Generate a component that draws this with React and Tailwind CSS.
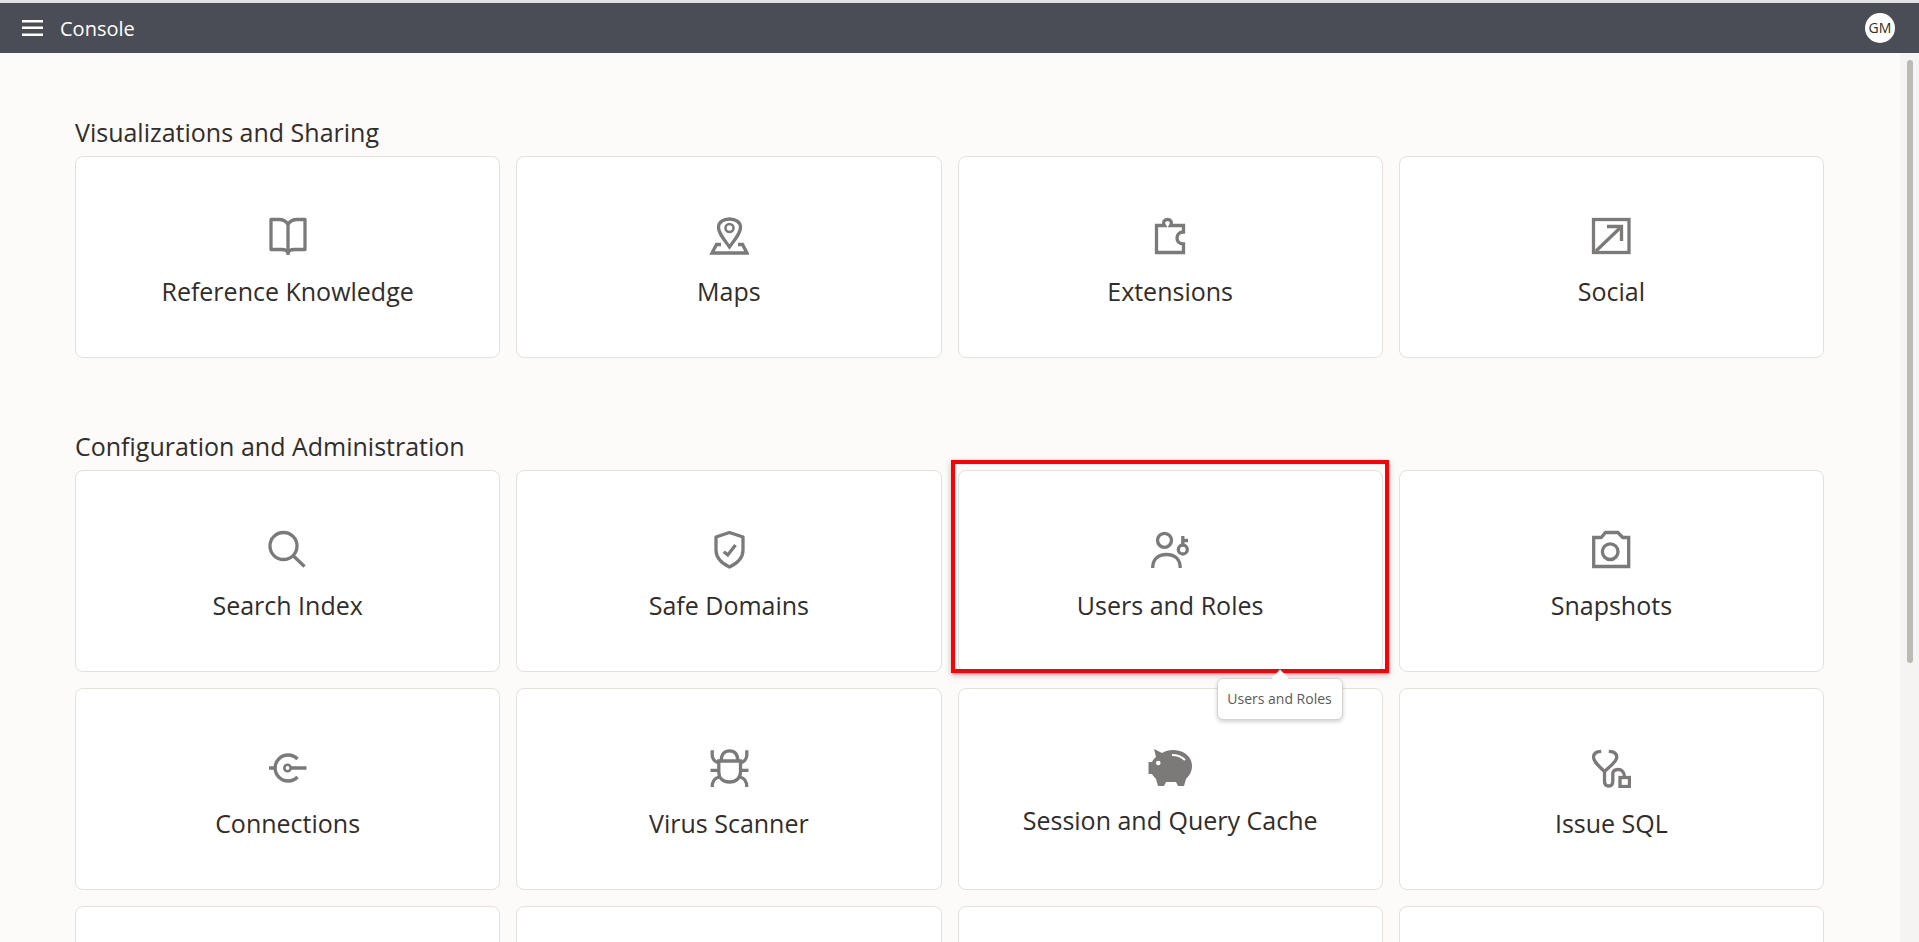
const base = {
    fill: 'none',
    stroke: 'currentColor',
    strokeWidth: 3.3,
};

function Icon({ children }) {
    return (
        <svg viewBox="0 0 40 40" {...base} className="h-10 w-10 shrink-0">
            {children}
        </svg>
    );
}

const BookIcon = () => (
    <Icon>
        <path d="M20 8.5C18 5 15 3.5 11 3.5H3V33.5H14C17 33.5 19 34.5 20 36.5C21 34.5 23 33.5 26 33.5H37V3.5H29C25 3.5 22 5 20 8.5Z" strokeLinejoin="round" />
        <path d="M20 8.5V39" />
    </Icon>
);

const MapIcon = () => (
    <Icon>
        <path d="M20.5 31C14 22 9.5 17 9.5 11.5C9.5 6 14.5 3 20.5 3C26.5 3 31.5 6 31.5 11.5C31.5 17 27 22 20.5 31Z" />
        <circle cx="20.5" cy="12" r="4" strokeWidth="2.6" />
        <path d="M12 28.5H7.5L3 37H38L33.5 28.5H29" />
    </Icon>
);

const PuzzleIcon = () => (
    <Icon>
        <path d="M6.5 36.5V9.5H14.5C12.5 6 14 3.5 17.5 3.5C21 3.5 22.5 6 20.5 9.5H33.5V16C29 16 27 19 27 22C27 25 29 28 33.5 28V36.5Z" strokeLinejoin="miter" />
    </Icon>
);

const ShareIcon = () => (
    <Icon>
        <rect x="2.5" y="3.5" width="35.5" height="33" />
        <path d="M5 35L30 11" />
        <path d="M16 10.5H30.5V25" />
    </Icon>
);

const SearchIcon = () => (
    <Icon>
        <circle cx="15.5" cy="16" r="13.5" />
        <path d="M25.5 26L36.5 36.5" />
    </Icon>
);

const ShieldIcon = () => (
    <Icon>
        <path d="M20.5 2.5L34 7V20C34 28 28 33.5 20.5 37C13 33.5 7 28 7 20V7Z" strokeLinejoin="round" />
        <path d="M14.8 21.7L18.8 25L26.5 15" />
    </Icon>
);

const UserKeyIcon = () => (
    <Icon>
        <circle cx="14.5" cy="10.3" r="7" />
        <path d="M2.7 38C2.7 29 8 24.5 16.5 24.5C25 24.5 30.2 29 30.2 38" />
        <circle cx="32.8" cy="19.5" r="4.5" />
        <path d="M32.8 6V15M32.8 10.5H38" />
    </Icon>
);

const CameraIcon = () => (
    <Icon>
        <path d="M2.7 7.5H10.2L14.5 2.5H26.8L31.8 7.5H37.7V36.5H2.7Z" />
        <circle cx="19.2" cy="21.7" r="7.8" />
    </Icon>
);

const ConnectionIcon = () => (
    <Icon>
        <path d="M29.5 11A13 13 0 1 0 29.5 29" />
        <circle cx="19.5" cy="20" r="3.2" strokeWidth="2.6" />
        <path d="M23 20H38.5M1 20H7.5" />
    </Icon>
);

const BugIcon = () => (
    <Icon>
        <path d="M12.2 13C12.2 6 15.5 2.8 20.5 2.8C25.5 2.8 28.8 6 28.8 13" />
        <path d="M9.8 13H31.5V24C31.5 30 27 34 20.5 34C14 34 9.8 30 9.8 24Z" />
        <path d="M3.2 2.3V7C3.2 11 6 14 9.8 14.5M37.8 2.3V7C37.8 11 35 14 31.5 14.5" />
        <path d="M1.5 22.3H9.8M31.5 22.3H39.5" />
        <path d="M10 29C5.5 30 3.2 33.5 3.2 39M31 29C35.5 30 37.8 33.5 37.8 39" />
    </Icon>
);

const PiggyIcon = () => (
    <svg viewBox="0 0 44 40" className="h-10 w-11 shrink-0">
        <path
            fill="currentColor"
            d="M6 1L14 5C17 3 21 2 25 2C35 2 44 8 44 18C44 24 41 28 38 31L36 38H30L28 34H18L16 38H10L8 31C6 29 5 27.5 4 26H0.5V14H4C5 12 6 10.5 8 9Z"
        />
        <circle cx="10.3" cy="15" r="2.3" fill="white" />
        <path d="M24 7C29 7 33.5 8.5 37 12" fill="none" stroke="white" strokeWidth="2" />
    </svg>
);

const StethoscopeIcon = () => (
    <Icon>
        <path d="M10.2 3.3C5.5 3.5 2.5 5.5 2.5 9C2.5 14 8 18 13.5 23.5C19 18 25.8 14 25.8 9C25.8 5.5 22.5 3.5 17.8 3.3" />
        <path d="M13.5 23.5V33C13.5 36.5 15.5 38 17.8 38C20 38 21.8 36.5 21.8 33V26C21.8 23 24 21.5 27 21.5C30.5 21.5 33.5 24 33.5 29" />
        <rect x="29" y="29.5" width="9.5" height="9" />
    </Icon>
);

const sections = [
    {
        title: 'Visualizations and Sharing',
        cards: [
            { label: 'Reference Knowledge', icon: BookIcon },
            { label: 'Maps', icon: MapIcon },
            { label: 'Extensions', icon: PuzzleIcon },
            { label: 'Social', icon: ShareIcon },
        ],
    },
    {
        title: 'Configuration and Administration',
        cards: [
            { label: 'Search Index', icon: SearchIcon },
            { label: 'Safe Domains', icon: ShieldIcon },
            { label: 'Users and Roles', icon: UserKeyIcon, active: true },
            { label: 'Snapshots', icon: CameraIcon },
            { label: 'Connections', icon: ConnectionIcon },
            { label: 'Virus Scanner', icon: BugIcon },
            { label: 'Session and Query Cache', icon: PiggyIcon, short: true },
            { label: 'Issue SQL', icon: StethoscopeIcon },
            { label: '' },
            { label: '' },
            { label: '' },
            { label: '' },
        ],
    },
];

function Card({ label, icon: CardIcon, active, short }) {
    return (
        <div className="relative flex h-[202px] flex-col items-center rounded-lg border border-[#e4e1dd] bg-white pt-[59px]">
            {CardIcon && (
                <span className="text-[#7b7a79]">
                    <CardIcon />
                </span>
            )}
            <span className={`${short ? 'mt-[12px]' : 'mt-[15px]'} text-[25px] leading-[40px] text-[#312d2a]`}>
                {label}
            </span>

            {active && (
                <>
                    {/* Red highlight drawn over the card */}
                    <div className="absolute -top-[11px] -left-[8px] -right-[7px] -bottom-[2px] border-4 border-[#fe0000] shadow-[0_2px_6px_rgba(0,0,0,0.25)]" />
                    {/* Hover tooltip */}
                    <div className="absolute top-[207px] left-[258px] z-10 flex h-[42px] w-[126px] items-center justify-center rounded-md border border-[#d6d3cf] bg-white text-sm text-[#5c5955] shadow-[0_2px_4px_rgba(0,0,0,0.18)]">
                        <span className="absolute -top-[7px] left-1/2 h-3 w-3 -translate-x-1/2 rotate-45 bg-white" />
                        <span className="relative">{label}</span>
                    </div>
                </>
            )}
        </div>
    );
}

export default function App() {
    return (
        <div className="flex h-screen flex-col overflow-hidden bg-[#fcfbfa] font-['Open_Sans','Noto_Sans',sans-serif]">
            <div className="h-[3px] shrink-0 bg-[#dfe1e3]" />
            <header className="flex h-[50px] shrink-0 items-center justify-between bg-[#4a4d55] pl-[22px] pr-6 text-white">
                <div className="flex items-center gap-[17px]">
                    <svg viewBox="0 0 21 16" className="h-4 w-[21px] fill-current">
                        <rect width="21" height="2.5" />
                        <rect y="6.5" width="21" height="2.5" />
                        <rect y="13.5" width="21" height="2.5" />
                    </svg>
                    <span className="pt-px text-xl">Console</span>
                </div>
                <span className="flex h-[30px] w-[30px] items-center justify-center rounded-full bg-white text-sm text-[#312d2a]">
                    GM
                </span>
            </header>

            <div className="flex min-h-0 flex-1">
                <main className="min-w-0 flex-1 overflow-hidden pl-[75px] pr-[76px] pt-[64px]">
                    {sections.map((section) => (
                        <section key={section.title} className="mb-[73px]">
                            <h2 className="mb-[9px] text-[25px] leading-[30px] text-[#312d2a]">
                                {section.title}
                            </h2>
                            <div className="grid grid-cols-4 gap-4">
                                {section.cards.map((card, i) => (
                                    <Card key={i} {...card} />
                                ))}
                            </div>
                        </section>
                    ))}
                </main>

                {/* Scrollbar */}
                <div className="w-[19px] shrink-0 bg-[#f5f4f2] pl-[7px] pt-[7px]">
                    <div className="h-[603px] w-[6px] rounded-full bg-[#bdb9b5]" />
                </div>
            </div>
        </div>
    );
}
